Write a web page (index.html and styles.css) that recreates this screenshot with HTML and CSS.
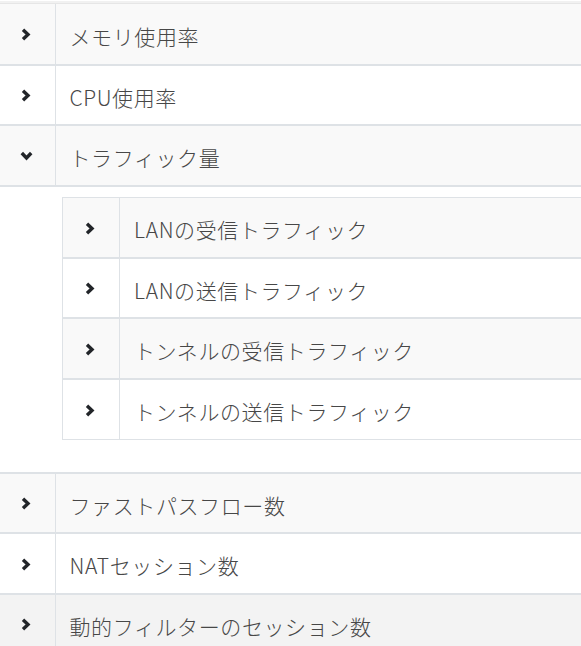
FILE: index.html
```html
<!DOCTYPE html>
<html lang="ja">
<head>
<meta charset="utf-8">
<link rel="stylesheet" href="styles.css">
</head>
<body>
<div class="topstrip"></div>
<table class="tbl outer">
  <tbody>
    <tr class="striped">
      <td class="ic"><svg class="chev" viewBox="0 0 10 13"><polyline points="2,1.8 7,6.5 2,11.2"/></svg></td>
      <td class="lbl">メモリ使用率</td>
    </tr>
    <tr>
      <td class="ic"><svg class="chev" viewBox="0 0 10 13"><polyline points="2,1.8 7,6.5 2,11.2"/></svg></td>
      <td class="lbl">CPU使用率</td>
    </tr>
    <tr class="striped">
      <td class="ic"><svg class="chevd" viewBox="0 0 13 10"><polyline points="1.8,2 6.5,7 11.2,2"/></svg></td>
      <td class="lbl">トラフィック量</td>
    </tr>
    <tr class="nestrow">
      <td colspan="2" class="nestcell">
        <table class="tbl inner">
          <tbody>
            <tr class="striped">
              <td class="ic"><svg class="chev" viewBox="0 0 10 13"><polyline points="2,1.8 7,6.5 2,11.2"/></svg></td>
              <td class="lbl">LANの受信トラフィック</td>
            </tr>
            <tr>
              <td class="ic"><svg class="chev" viewBox="0 0 10 13"><polyline points="2,1.8 7,6.5 2,11.2"/></svg></td>
              <td class="lbl">LANの送信トラフィック</td>
            </tr>
            <tr class="striped">
              <td class="ic"><svg class="chev" viewBox="0 0 10 13"><polyline points="2,1.8 7,6.5 2,11.2"/></svg></td>
              <td class="lbl">トンネルの受信トラフィック</td>
            </tr>
            <tr class="last">
              <td class="ic"><svg class="chev" viewBox="0 0 10 13"><polyline points="2,1.8 7,6.5 2,11.2"/></svg></td>
              <td class="lbl">トンネルの送信トラフィック</td>
            </tr>
          </tbody>
        </table>
      </td>
    </tr>
    <tr class="striped">
      <td class="ic"><svg class="chev" viewBox="0 0 10 13"><polyline points="2,1.8 7,6.5 2,11.2"/></svg></td>
      <td class="lbl">ファストパスフロー数</td>
    </tr>
    <tr>
      <td class="ic"><svg class="chev" viewBox="0 0 10 13"><polyline points="2,1.8 7,6.5 2,11.2"/></svg></td>
      <td class="lbl">NATセッション数</td>
    </tr>
    <tr class="hover">
      <td class="ic"><svg class="chev" viewBox="0 0 10 13"><polyline points="2,1.8 7,6.5 2,11.2"/></svg></td>
      <td class="lbl">動的フィルターのセッション数</td>
    </tr>
  </tbody>
</table>
</body>
</html>
```

FILE: styles.css
```css
html, body {
  margin: 0;
  padding: 0;
  background: #ffffff;
}
body {
  font-family: "Noto Sans CJK JP", "Noto Sans", sans-serif;
  color: #333333;
  overflow: hidden;
}
.topstrip {
  margin-top: 1px;
  height: 2px;
  background: #f1f1f1;
  border-bottom: 1px solid #e6e6e6;
}
.tbl {
  width: 100%;
  border-collapse: collapse;
  border-spacing: 0;
}
.tbl td {
  padding: 0;
  border-bottom: 2px solid #dee2e6;
}
.tbl tr {
  background: #ffffff;
}
.tbl tr.striped {
  background: #f9f9f9;
}
.tbl tr.hover {
  background: #f3f3f3;
}
.ic {
  width: 55px;
  height: 60.5px;
  box-sizing: border-box;
  padding-top: 2px !important;
  text-align: center;
  vertical-align: middle;
  border-right: 1px solid #dee2e6;
  line-height: 0;
}
.inner .ic {
  width: 57px;
}
.lbl {
  height: 60.5px;
  padding-left: 14px !important;
  padding-top: 4px !important;
  box-sizing: border-box;
  font-size: 21px;
  font-weight: 300;
  vertical-align: middle;
  white-space: nowrap;
  letter-spacing: 0.6px;
  color: #474747;
}
.chev {
  width: 10px;
  height: 13px;
  margin-left: -2px;
}
.chevd {
  width: 13px;
  height: 10px;
  margin-left: -2px;
}
.chev polyline, .chevd polyline {
  fill: none;
  stroke: #222529;
  stroke-width: 3.4;
  stroke-linecap: butt;
  stroke-linejoin: miter;
}
.nestcell {
  padding: 10px 0 32px 62px !important;
}
.inner {
  border-top: 1px solid #dee2e6;
  border-left: 1px solid #dee2e6;
}
.inner tr.last td {
  border-bottom: 1px solid #dee2e6;
}
```
